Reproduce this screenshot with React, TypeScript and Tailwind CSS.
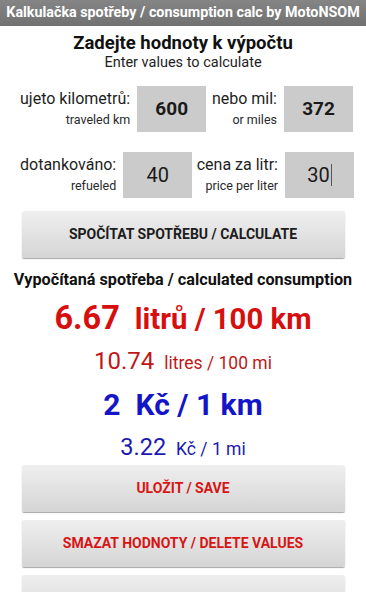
import React from 'react';

const font = { fontFamily: 'Roboto, "Noto Sans", sans-serif' };

function Field({
  label,
  sub,
  value,
  bold,
  cursor,
}: {
  label: string;
  sub: string;
  value: string;
  bold?: boolean;
  cursor?: boolean;
}) {
  return (
    <div className="flex items-center gap-[7px]">
      <div className="flex flex-col items-end whitespace-nowrap leading-none">
        <span className="text-[16px] text-[#1e1e1e]">{label}</span>
        <span className="mt-[7px] text-[12.5px] text-[#2a2a2a]">{sub}</span>
      </div>
      <div className="flex h-[46px] w-[69px] items-center justify-center bg-[#cbcbcb]">
        <span className={`${bold ? 'text-[19px] font-bold' : 'text-[20px]'} text-[#1a1a1a]`}>{value}</span>
        {cursor && <span className="ml-px h-[22px] w-px bg-[#555]" />}
      </div>
    </div>
  );
}

function GrayButton({ children, red }: { children: React.ReactNode; red?: boolean }) {
  return (
    <button
      type="button"
      className={`flex h-[47px] w-[323px] shrink-0 items-center justify-center rounded-[2px] bg-gradient-to-b from-[#efefef] to-[#d5d5d5] text-[14px] font-bold whitespace-nowrap shadow-[0_1px_1px_rgba(0,0,0,0.35)] ${
        red ? 'text-[#d71515]' : 'text-[#1c1c1c]'
      }`}
    >
      {children}
    </button>
  );
}

export default function App() {
  return (
    <div className="h-[592px] w-[366px] overflow-hidden bg-white" style={font}>
      <div className="flex h-[26px] items-center justify-center whitespace-nowrap bg-gradient-to-b from-[#858585] to-[#717171] text-[14.3px] font-bold text-white">
        Kalkulačka spotřeby / consumption calc by MotoNSOM
      </div>

      <div className="mt-[6px] text-center text-[18.5px] font-bold leading-[22px] text-[#111]">Zadejte hodnoty k výpočtu</div>
      <div className="text-center text-[14.5px] leading-[18px] text-[#1e1e1e]">Enter values to calculate</div>

      <div className="mt-[14px] flex justify-between pl-[20px] pr-[13px]">
        <Field label="ujeto kilometrů:" sub="traveled km" value="600" bold />
        <Field label="nebo mil:" sub="or miles" value="372" bold />
      </div>

      <div className="mt-[20px] flex justify-between pl-[20px] pr-[12px]">
        <Field label="dotankováno:" sub="refueled" value="40" />
        <Field label="cena za litr:" sub="price per liter" value="30" cursor />
      </div>

      <div className="mt-[13px] flex justify-center">
        <GrayButton>SPOČÍTAT SPOTŘEBU / CALCULATE</GrayButton>
      </div>

      <div className="mt-[11.5px] whitespace-nowrap text-center text-[16.2px] font-bold leading-[20px] text-[#111]">
        Vypočítaná spotřeba / calculated consumption
      </div>

      <div className="mt-[12.7px] flex items-baseline justify-center gap-[15px] whitespace-nowrap font-bold leading-none text-[#d60f0f]">
        <span className="text-[32.5px]">6.67</span>
        <span className="text-[29.3px]">litrů / 100 km</span>
      </div>
      <div className="mt-[14.6px] flex items-baseline justify-center gap-[10px] whitespace-nowrap leading-none text-[#c01818]">
        <span className="text-[24px]">10.74</span>
        <span className="text-[17.5px]">litres / 100 mi</span>
      </div>
      <div className="mt-[16.9px] flex items-baseline justify-center gap-[15px] whitespace-nowrap font-bold leading-none text-[#1515c8]">
        <span className="text-[30px]">2</span>
        <span className="text-[30px]">Kč / 1 km</span>
      </div>
      <div className="mt-[15.5px] flex items-baseline justify-center gap-[10px] whitespace-nowrap leading-none text-[#1a1ab0]">
        <span className="text-[23.5px]">3.22</span>
        <span className="text-[17.5px]">Kč / 1 mi</span>
      </div>

      <div className="mt-[6px] flex flex-col items-center gap-[8px]">
        <GrayButton red>ULOŽIT / SAVE</GrayButton>
        <GrayButton red>SMAZAT HODNOTY / DELETE VALUES</GrayButton>
        <GrayButton red>{''}</GrayButton>
      </div>
    </div>
  );
}
